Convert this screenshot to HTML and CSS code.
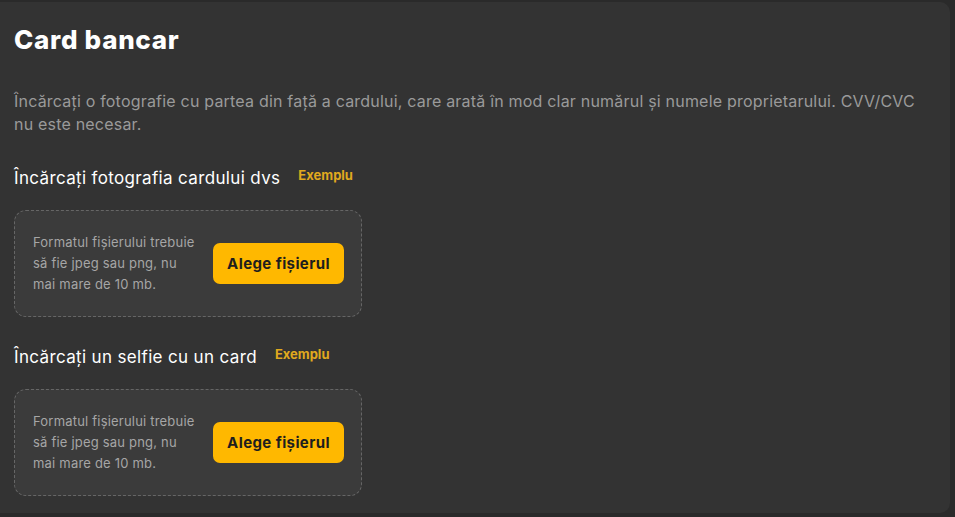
FILE: index.html
```html
<!DOCTYPE html>
<html lang="ro">
<head>
<meta charset="utf-8">
<title>Card bancar</title>
<link rel="stylesheet" href="styles.css">
</head>
<body>
<div class="panel">
  <h1 class="title">Card bancar</h1>
  <p class="desc">Încărcați o fotografie cu partea din față a cardului, care arată în mod clar numărul și numele proprietarului. CVV/CVC nu este necesar.</p>

  <div class="label-row">
    <span class="label">Încărcați fotografia cardului dvs</span>
    <a class="example">Exemplu</a>
  </div>
  <div class="upload">
    <p class="upload-text">Formatul fișierului trebuie să fie jpeg sau png, nu mai mare de 10 mb.</p>
    <button class="btn">Alege fișierul</button>
  </div>

  <div class="label-row second">
    <span class="label">Încărcați un selfie cu un card</span>
    <a class="example">Exemplu</a>
  </div>
  <div class="upload second-box">
    <p class="upload-text">Formatul fișierului trebuie să fie jpeg sau png, nu mai mare de 10 mb.</p>
    <button class="btn">Alege fișierul</button>
  </div>
</div>
</body>
</html>
```

FILE: styles.css
```css
html, body {
  margin: 0;
  padding: 0;
  background: #2a2a2a;
  height: 517px;
  overflow: hidden;
}
body {
  font-family: "Inter", "Noto Sans", sans-serif;
  padding: 2px 5px 4px 0;
  box-sizing: border-box;
}
.panel {
  background: #333333;
  border-radius: 0 10px 10px 0;
  height: 511px;
  box-sizing: border-box;
  padding: 22px 14px 0 14px;
}
.title {
  margin: 0;
  color: #ffffff;
  font-size: 26px;
  font-weight: 800;
  line-height: 32px;
  letter-spacing: 0.7px;
}
.desc {
  margin: 34px 0 0 0;
  color: #9a9a9a;
  font-size: 16px;
  line-height: 23px;
  letter-spacing: 0.2px;
}
.label-row {
  display: flex;
  align-items: baseline;
  gap: 18px;
  margin-top: 31px;
}
.label-row.second {
  margin-top: 29px;
}
.label {
  color: #ffffff;
  font-size: 17px;
  line-height: 22px;
  letter-spacing: 0.35px;
}
.example {
  color: #e0a91e;
  font-size: 13px;
  font-weight: 700;
  position: relative;
  top: -4px;
}
.upload {
  margin-top: 21px;
  width: 348px;
  height: 107px;
  box-sizing: border-box;
  border: 1px dashed #666;
  border-radius: 12px;
  background: #3b3b3b;
  display: flex;
  align-items: center;
  justify-content: space-between;
  padding: 0 17px 0 18px;
}
.upload-text {
  margin: 0;
  width: 168px;
  color: #a6a6a6;
  font-size: 13px;
  line-height: 21px;
  letter-spacing: 0.2px;
}
.btn {
  background: #ffb800;
  border: none;
  border-radius: 7px;
  width: 131px;
  height: 41px;
  font-family: inherit;
  font-size: 15px;
  font-weight: 700;
  color: #1e1e1e;
  padding: 0;
  letter-spacing: 0.4px;
}
```
